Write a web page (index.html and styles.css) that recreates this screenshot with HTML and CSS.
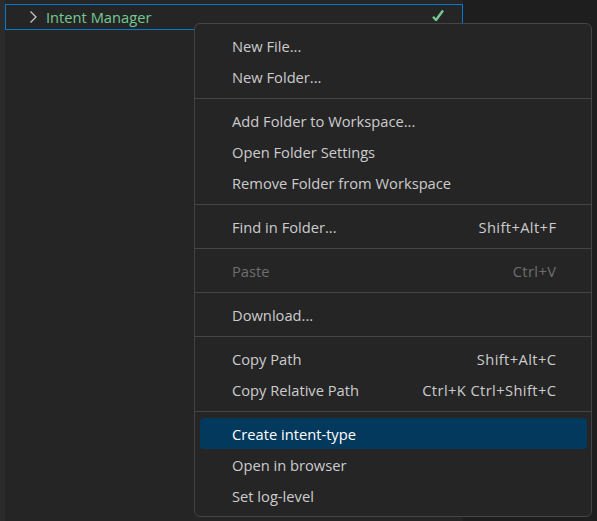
FILE: index.html
```html
<!DOCTYPE html>
<html>
<head>
<meta charset="utf-8">
<link rel="stylesheet" href="styles.css">
</head>
<body>
<div class="app">
  <div class="activity"></div>
  <div class="sidebar">
    <div class="row">
      <svg class="chev" width="16" height="16" viewBox="0 0 16 16"><path d="M5.5 2.5 11 8 5.5 13.5" fill="none" stroke="#c5c5c5" stroke-width="1.3"/></svg>
      <span class="name">Intent Manager</span>
      <svg class="check" width="14" height="14" viewBox="0 0 14 14"><path d="M2 7.8 5 11 12 1.5" fill="none" stroke="#73c991" stroke-width="2.4" stroke-linejoin="round"/></svg>
    </div>
  </div>
  <div class="editor"></div>
</div>
<div class="menu">
  <div class="item"><span>New File...</span></div>
  <div class="item"><span>New Folder...</span></div>
  <div class="sep"></div>
  <div class="item"><span>Add Folder to Workspace...</span></div>
  <div class="item"><span>Open Folder Settings</span></div>
  <div class="item"><span>Remove Folder from Workspace</span></div>
  <div class="sep"></div>
  <div class="item"><span>Find in Folder...</span><span class="key">Shift+Alt+F</span></div>
  <div class="sep"></div>
  <div class="item disabled"><span>Paste</span><span class="key">Ctrl+V</span></div>
  <div class="sep"></div>
  <div class="item"><span>Download...</span></div>
  <div class="sep"></div>
  <div class="item"><span>Copy Path</span><span class="key">Shift+Alt+C</span></div>
  <div class="item"><span>Copy Relative Path</span><span class="key">Ctrl+K Ctrl+Shift+C</span></div>
  <div class="sep"></div>
  <div class="item active"><span>Create intent-type</span></div>
  <div class="item"><span>Open in browser</span></div>
  <div class="item"><span>Set log-level</span></div>
</div>
</body>
</html>
```
FILE: styles.css
```css
html, body {
  margin: 0;
  padding: 0;
  background: #1e1e1e;
  width: 597px;
  height: 521px;
  overflow: hidden;
  font-family: "Open Sans", "Noto Sans", sans-serif;
}
.app {
  display: flex;
  height: 521px;
}
.activity {
  width: 5px;
  background: #2b2b2b;
}
.sidebar {
  width: 458px;
  background: #252526;
  padding-top: 4px;
  box-sizing: border-box;
}
.editor {
  flex: 1;
  background: #1e1e1e;
}
.row {
  height: 26px;
  box-sizing: border-box;
  border: 1px solid #0078d4;
  display: flex;
  align-items: center;
  padding-left: 19px;
  color: #73c991;
  font-size: 14.7px;
}
.chev {
  margin-right: 5px;
}
.name {
  flex: 1;
}
.check {
  margin-right: 17px;
  margin-top: -2px;
}
.menu {
  position: absolute;
  left: 194px;
  top: 23px;
  width: 398px;
  box-sizing: border-box;
  background: #252526;
  border: 1px solid #454545;
  border-radius: 6px;
  padding: 6px 0 5px;
  color: #cccccc;
  font-size: 14.7px;
}
.item {
  height: 31px;
  margin: 0 4px 0 5px;
  padding: 0 31px 0 32px;
  display: flex;
  align-items: center;
  justify-content: space-between;
  border-radius: 4px;
}
.key {
  letter-spacing: 0.4px;
  margin-right: -0.4px;
}
.item.active {
  background: #04395e;
  color: #ffffff;
}
.item.disabled {
  color: #6e6e6e;
}
.sep {
  height: 1px;
  background: #454545;
  margin: 6px 0;
}
```
